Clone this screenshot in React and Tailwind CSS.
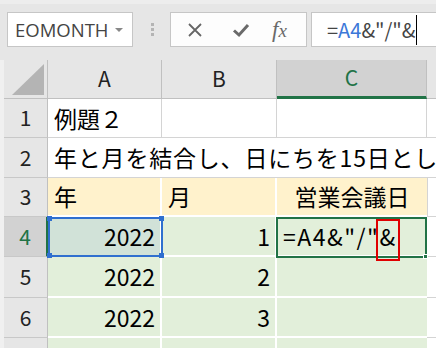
import React from "react";

const F = { fontFamily: '"Noto Sans CJK JP", "Noto Sans", sans-serif' };

function RowHead({ n, h, sel }) {
  return (
    <div
      className={`w-[44px] shrink-0 flex items-center justify-center text-[21px] border-b border-[#c8c8c8] ${
        sel
          ? "bg-[#d2d2d2] text-[#217346] border-r-2 border-r-[#217346]"
          : "bg-[#e6e6e6] text-[#222] border-r border-r-[#c0c0c0]"
      } ${h}`}
    >
      {n}
    </div>
  );
}

export default function App() {
  return (
    <div className="w-[436px] h-[348px] overflow-hidden bg-white" style={F}>
      {/* toolbar */}
      <div className="h-[60px] bg-[#e6e6e6] border-t-[4px] border-t-[#ededed] flex items-start pt-[8px] pl-[7px]">
        <div className="w-[126px] h-[35px] bg-white border border-[#c6c6c6] flex items-center pl-[7px]">
          <span className="text-[18.5px] text-[#444]" style={{ fontFamily: '"Open Sans", sans-serif' }}>
            EOMONTH
          </span>
          <span className="ml-auto mr-[9px] w-0 h-0 border-l-[4px] border-r-[4px] border-t-[4px] border-l-transparent border-r-transparent border-t-[#888]" />
        </div>
        <div className="ml-[18px] mt-[11px] flex flex-col gap-[2px]">
          <span className="w-[3px] h-[3px] bg-[#b4b4b4]" />
          <span className="w-[3px] h-[3px] bg-[#b4b4b4]" />
          <span className="w-[3px] h-[3px] bg-[#b4b4b4]" />
        </div>
        <div className="ml-[16px] w-[137px] h-[35px] bg-[#fdfdfd] border border-[#c6c6c6] flex items-center">
          <svg className="ml-[16px]" width="16" height="16" viewBox="0 0 16 16">
            <path d="M2 2 L14 14 M14 2 L2 14" stroke="#666" strokeWidth="1.8" fill="none" />
          </svg>
          <svg className="ml-[29px]" width="18" height="16" viewBox="0 0 18 16">
            <path d="M2 8.5 L7 13 L16 3" stroke="#6a6a6a" strokeWidth="3" fill="none" />
          </svg>
          <span
            className="ml-[22px] text-[23px] italic text-[#6a6a6a] leading-none"
            style={{ fontFamily: '"Liberation Serif", serif' }}
          >
            f<span className="text-[19px]">x</span>
          </span>
        </div>
        <div className="ml-[4px] flex-1 h-[35px] bg-white border border-r-0 border-[#c6c6c6] flex items-center pl-[15px] text-[20px] text-[#444]">
          <span>=</span>
          <span className="text-[#3c78d8]">A4</span>
          <span>&amp;"/"&amp;</span>
          <span className="ml-[1px] w-[1px] h-[30px] bg-black" />
        </div>
      </div>

      {/* column headers */}
      <div className="flex h-[39px] bg-[#e6e6e6]">
        <div className="w-[4px] shrink-0 bg-[#f0f0f0]" />
        <div className="w-[44px] shrink-0 border-r border-b border-[#c0c0c0] flex items-end justify-end pr-[3px] pb-[3px]">
          <svg width="32" height="31" viewBox="0 0 32 31">
            <path d="M32 0 L32 31 L0 31 Z" fill="#b4b4b4" />
          </svg>
        </div>
        <div className="w-[114px] shrink-0 border-r border-b border-[#c0c0c0] flex items-center justify-center text-[21px] text-[#222]">A</div>
        <div className="w-[115px] shrink-0 border-r border-b border-[#c0c0c0] flex items-center justify-center text-[21px] text-[#222]">B</div>
        <div className="w-[150px] shrink-0 bg-[#d2d2d2] border-r border-r-[#c0c0c0] border-b-[3px] border-b-[#217346] flex items-center justify-center text-[21px] text-[#217346]">C</div>
        <div className="flex-1 border-b border-[#c0c0c0]" />
      </div>

      {/* row 1 */}
      <div className="flex h-[39px]">
        <div className="w-[4px] shrink-0 bg-[#f0f0f0]" />
        <RowHead n="1" h="h-[39px]" />
        <div className="w-[114px] shrink-0 border-r border-b border-[#d4d4d4] flex items-center pl-[6px] text-[23px] text-black">例題２</div>
        <div className="w-[115px] shrink-0 border-r border-b border-[#d4d4d4]" />
        <div className="w-[150px] shrink-0 border-r border-b border-[#d4d4d4]" />
        <div className="flex-1 border-b border-[#d4d4d4]" />
      </div>

      {/* row 2 */}
      <div className="flex h-[40px]">
        <div className="w-[4px] shrink-0 bg-[#f0f0f0]" />
        <RowHead n="2" h="h-[40px]" />
        <div className="flex-1 border-b border-[#d4d4d4] flex items-center pl-[6px] text-[23px] text-black whitespace-nowrap overflow-hidden tracking-[0.8px]">
          年と月を結合し、日にちを15日とし
        </div>
      </div>

      {/* row 3 */}
      <div className="flex h-[39px]">
        <div className="w-[4px] shrink-0 bg-[#f0f0f0]" />
        <RowHead n="3" h="h-[39px]" />
        <div className="w-[114px] shrink-0 bg-[#fff2cc] border-r-2 border-b-2 border-white flex items-center pl-[6px] text-[23px] text-black">年</div>
        <div className="w-[115px] shrink-0 bg-[#fff2cc] border-r-2 border-b-2 border-white flex items-center pl-[6px] text-[23px] text-black">月</div>
        <div className="w-[150px] shrink-0 bg-[#fff2cc] border-b-2 border-white flex items-center justify-center text-[23px] text-black">営業会議日</div>
        <div className="flex-1 border-b border-[#d4d4d4] border-l border-l-[#d4d4d4]" />
      </div>

      {/* row 4 */}
      <div className="flex h-[40px]">
        <div className="w-[4px] shrink-0 bg-[#f0f0f0]" />
        <RowHead n="4" h="h-[40px]" sel />
        <div className="relative w-[114px] shrink-0 bg-[#d1e2d8] border-r-2 border-b-2 border-white flex items-center justify-end pr-[5px] text-[23px] text-black">
          2022
          <div className="absolute left-[0px] top-[0px] w-[115px] h-[40px] border-2 border-[#2f6fcf]">
            <span className="absolute -left-[3px] -top-[3px] w-[5px] h-[5px] bg-[#2f6fcf]" />
            <span className="absolute -right-[3px] -top-[3px] w-[5px] h-[5px] bg-[#2f6fcf]" />
            <span className="absolute -left-[3px] -bottom-[3px] w-[5px] h-[5px] bg-[#2f6fcf]" />
            <span className="absolute -right-[3px] -bottom-[3px] w-[5px] h-[5px] bg-[#2f6fcf]" />
          </div>
        </div>
        <div className="w-[115px] shrink-0 bg-[#e2efda] border-r-2 border-b-2 border-white flex items-center justify-end pr-[5px] text-[23px] text-black">1</div>
        <div className="relative w-[150px] shrink-0 bg-[#e2efda] border-b-2 border-white flex items-center pl-[6px] text-[23px] text-black whitespace-nowrap tracking-[1.5px]">
          =A4&amp;"/"&amp;
          <div className="absolute left-[-1px] top-[0px] w-[151px] h-[41px] border-2 border-[#217346]">
            <span className="absolute -right-[3px] -bottom-[3px] w-[5px] h-[5px] bg-[#217346] border border-white" />
          </div>
          <div className="absolute left-[99px] top-[2px] w-[24px] h-[42px] border-2 border-[#e00000]" />
        </div>
        <div className="flex-1 border-b border-[#d4d4d4]" />
      </div>

      {/* rows 5-7 */}
      {[
        ["5", "2022", "2", "h-[41px]"],
        ["6", "2022", "3", "h-[40px]"],
        ["", "", "", "h-[40px]"],
      ].map(([n, a, b, h], i) => (
        <div key={i} className={`flex ${h}`}>
          <div className="w-[4px] shrink-0 bg-[#f0f0f0]" />
          <RowHead n={n} h={h} />
          <div className="w-[114px] shrink-0 bg-[#e2efda] border-r-2 border-b-2 border-white flex items-center justify-end pr-[5px] text-[23px] text-black">{a}</div>
          <div className="w-[115px] shrink-0 bg-[#e2efda] border-r-2 border-b-2 border-white flex items-center justify-end pr-[5px] text-[23px] text-black">{b}</div>
          <div className="w-[150px] shrink-0 bg-[#e2efda] border-b-2 border-white" />
          <div className="flex-1 border-b border-[#d4d4d4]" />
        </div>
      ))}
    </div>
  );
}
